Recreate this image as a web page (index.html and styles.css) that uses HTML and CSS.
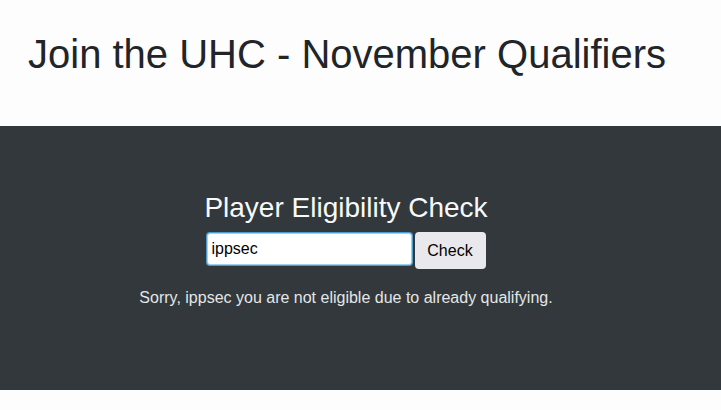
FILE: index.html
```html
<!DOCTYPE html>
<html>
<head>
<meta charset="utf-8">
<link rel="stylesheet" href="styles.css">
</head>
<body>
<header class="top">
  <h1 class="title">Join the UHC - November Qualifiers</h1>
</header>
<section class="panel">
  <div class="inner">
    <h2 class="subtitle">Player Eligibility Check</h2>
    <form class="check-form">
      <input class="name-input" type="text" value="ippsec">
      <button class="check-btn" type="button">Check</button>
    </form>
    <p class="message">Sorry, ippsec you are not eligible due to already qualifying.</p>
  </div>
</section>
</body>
</html>
```
FILE: styles.css
```css
html, body {
  margin: 0;
  padding: 0;
  background: #fdfdfd;
  font-family: "Liberation Sans", Arial, sans-serif;
}
.top {
  height: 126px;
  box-sizing: border-box;
  padding: 30px 0 0 28px;
}
.title {
  margin: 0;
  font-size: 40px;
  font-weight: 400;
  line-height: 48px;
  color: #212529;
}
.panel {
  height: 264px;
  background: #32383b;
  box-sizing: border-box;
  padding-top: 65px;
}
.inner {
  display: flex;
  flex-direction: column;
  align-items: center;
  padding-right: 29px;
}
.subtitle {
  margin: 0;
  font-size: 28px;
  font-weight: 400;
  line-height: 34px;
  color: #f8f9fa;
}
.check-form {
  display: flex;
  align-items: flex-start;
  gap: 3px;
  margin-top: 7px;
}
.name-input {
  width: 205px;
  height: 32px;
  box-sizing: border-box;
  border: 1px solid #9fd0ee;
  box-shadow: 0 0 0 1px #4a9ccf;
  border-radius: 3px;
  padding: 0 4px;
  font-family: "Liberation Sans", Arial, sans-serif;
  font-size: 16px;
  color: #000;
  background: #fff;
  outline: none;
  margin-top: 1px;
}
.check-btn {
  width: 71px;
  height: 37px;
  border: none;
  border-radius: 4px;
  background: #e9e9ed;
  font-family: "Liberation Sans", Arial, sans-serif;
  font-size: 16px;
  color: #000;
  padding: 0;
}
.message {
  margin: 20px 0 0;
  font-size: 16px;
  color: #e4e6e8;
}
```
